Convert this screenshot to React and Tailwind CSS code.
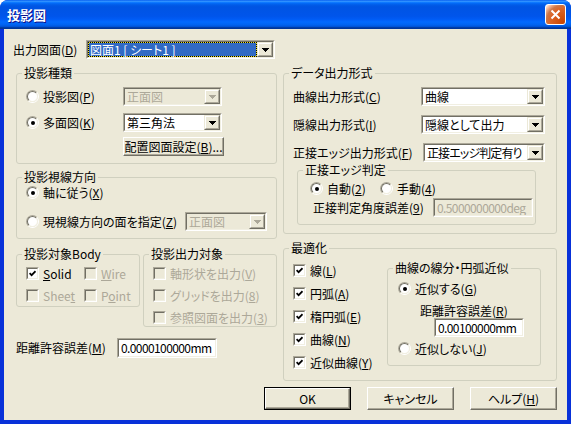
import React from "react";

// mnemonic underline
const U = ({ children }) => <span className="underline underline-offset-[1px]">{children}</span>;

function Radio({ checked }) {
  return (
    <span className="flex h-[13px] w-[13px] shrink-0 rounded-full border border-t-[#aca899] border-l-[#aca899] border-r-white border-b-white">
      <span className="flex h-full w-full items-center justify-center rounded-full border border-t-[#716f64] border-l-[#716f64] border-r-[#f1efe2] border-b-[#f1efe2] bg-white">
        {checked && <span className="h-[4px] w-[4px] rounded-full bg-black" />}
      </span>
    </span>
  );
}

function Check({ checked, disabled }) {
  return (
    <span className="flex h-[13px] w-[13px] shrink-0 border border-t-[#aca899] border-l-[#aca899] border-r-white border-b-white">
      <span
        className={`flex h-full w-full items-center justify-center border border-t-[#716f64] border-l-[#716f64] border-r-[#f1efe2] border-b-[#f1efe2] ${
          disabled ? "bg-[#ece9d8]" : "bg-white"
        }`}
      >
        {checked && (
          <svg width="7" height="7" viewBox="0 0 7 7">
            <path d="M0.6 3.2 L2.6 5.2 L6.5 1.2" fill="none" stroke="#000" strokeWidth="1.7" />
          </svg>
        )}
      </span>
    </span>
  );
}

function Opt({ radio, checked, disabled, className = "", children }) {
  return (
    <div className={`flex shrink-0 items-center gap-[4px] whitespace-nowrap ${disabled ? "text-[#aca899]" : ""} ${className}`}>
      {radio ? <Radio checked={checked} /> : <Check checked={checked} disabled={disabled} />}
      <span>{children}</span>
    </div>
  );
}

function Sunken({ className = "", inner = "", children }) {
  return (
    <div className={`flex shrink-0 border border-t-[#aca899] border-l-[#aca899] border-r-white border-b-white ${className}`}>
      <div className={`flex min-w-0 flex-1 border border-t-[#716f64] border-l-[#716f64] border-r-[#f1efe2] border-b-[#f1efe2] ${inner}`}>
        {children}
      </div>
    </div>
  );
}

function DropBtn({ disabled }) {
  return (
    <div className="flex h-full w-[16px] shrink-0 border border-t-[#ece9d8] border-l-[#ece9d8] border-r-[#716f64] border-b-[#716f64]">
      <div className="flex flex-1 items-center justify-center border border-t-white border-l-white border-r-[#aca899] border-b-[#aca899] bg-[#ece9d8]">
        <svg width="7" height="4" viewBox="0 0 7 4" shapeRendering="crispEdges">
          <polygon
            points="0,0 7,0 7,1 6,1 6,2 5,2 5,3 4,3 4,4 3,4 3,3 2,3 2,2 1,2 1,1 0,1"
            fill={disabled ? "#aca899" : "#000"}
          />
        </svg>
      </div>
    </div>
  );
}

function Combo({ className = "", text = "", disabled, selected, children }) {
  return (
    <Sunken className={`h-[19px] ${className}`} inner={disabled ? "bg-[#ece9d8]" : "bg-white"}>
      {selected ? (
        <div className="flex min-w-0 flex-1 border border-dotted border-black bg-[#f0e020]">
          <div className="flex flex-1 items-center whitespace-nowrap bg-[#316ac5] pl-[1px] text-white">{children}</div>
        </div>
      ) : (
        <div
          className={`flex min-w-0 flex-1 items-center overflow-hidden whitespace-nowrap pl-[2px] ${
            disabled ? "text-[#aca899]" : ""
          } ${text}`}
        >
          {children}
        </div>
      )}
      <DropBtn disabled={disabled} />
    </Sunken>
  );
}

function Edit({ className = "", disabled, children }) {
  return (
    <Sunken className={className} inner={disabled ? "bg-[#ece9d8] text-[#aca899]" : "bg-white"}>
      <div className="flex flex-1 items-center overflow-hidden whitespace-nowrap pl-[2px] tracking-[-0.6px]">{children}</div>
    </Sunken>
  );
}

function Btn({ className = "", def, children }) {
  return (
    <div className={`flex shrink-0 ${def ? "border border-black" : ""} ${className}`}>
      <div className="flex h-full w-full items-center justify-center whitespace-nowrap border border-t-white border-l-white border-r-[#716f64] border-b-[#716f64] shadow-[inset_-1px_-1px_0_#aca899]">
        {children}
      </div>
    </div>
  );
}

function Group({ title, className = "", children }) {
  return (
    <fieldset className={`shrink-0 rounded-[3px] border border-[#d0d0bf] ${className}`}>
      <legend className="ml-[5px] px-[2px] leading-[12px]">{title}</legend>
      {children}
    </fieldset>
  );
}

export default function App() {
  return (
    <div className="flex h-[424px] w-[571px] flex-col overflow-hidden rounded-t-[8px] bg-[#0831d9] font-['Noto_Sans_CJK_JP','Liberation_Sans',sans-serif] text-[12px] leading-[12px] text-black [font-feature-settings:'palt']">
      {/* title bar */}
      <div className="flex h-[29px] shrink-0 items-center justify-between bg-[linear-gradient(to_bottom,#0058ee_0%,#3593ff_4%,#288eff_6%,#127dff_8%,#036ffc_10%,#0262ee_14%,#0057e5_20%,#0054e3_24%,#0055eb_56%,#005bf5_66%,#026afe_76%,#0062ef_86%,#0052d6_92%,#0040ab_94%,#003092_100%)] pl-[7px] pr-[5px]">
        <span className="text-[13px] font-bold leading-[13px] text-white [text-shadow:1px_1px_0_#0f1089]">投影図</span>
        <div className="flex h-[21px] w-[21px] items-center justify-center rounded-[3px] border border-white bg-[radial-gradient(circle_at_90%_90%,#cc4600_0%,#dc6527_55%,#cd7546_70%,#ffccb2_90%,#fff_100%)]">
          <svg width="11" height="11" viewBox="0 0 11 11">
            <path d="M1.5 1.5 L9.5 9.5 M9.5 1.5 L1.5 9.5" stroke="#fff" strokeWidth="2" />
          </svg>
        </div>
      </div>

      {/* body */}
      <div className="mx-[4px] mb-[4px] flex h-[391px] flex-col bg-[#ece9d8]">
        <div className="ml-[9px] mt-[11px] flex h-[19px] items-center">
          <span className="w-[73px] whitespace-nowrap">
            出力図面(<U>D</U>)
          </span>
          <Combo selected className="w-[189px]">
            図面1 [ シート1 ]
          </Combo>
        </div>

        <div className="ml-[12px] mt-[8px] flex gap-[6px]">
          {/* left column */}
          <div className="flex w-[261px] flex-col">
            <Group title="投影種類" className="h-[97px]">
              <div className="mt-[8px] flex h-[19px] items-center pl-[9px]">
                <Opt radio className="w-[97px]">
                  投影図(<U>P</U>)
                </Opt>
                <Combo disabled className="w-[99px]">
                  正面図
                </Combo>
              </div>
              <div className="mt-[7px] flex h-[19px] items-center pl-[9px]">
                <Opt radio checked className="w-[97px]">
                  多面図(<U>K</U>)
                </Opt>
                <Combo className="w-[99px]">第三角法</Combo>
              </div>
              <div className="mt-[5px] flex pl-[106px]">
                <Btn className="h-[19px] w-[101px]">
                  配置図面設定(<U>B</U>)...
                </Btn>
              </div>
            </Group>

            <Group title="投影視線方向" className="mt-[7px] h-[68px]">
              <div className="mt-[3px] flex h-[13px] items-center pl-[9px]">
                <Opt radio checked>
                  軸に従う(<U>X</U>)
                </Opt>
              </div>
              <div className="mt-[13px] flex h-[19px] items-center pl-[9px]">
                <Opt radio className="w-[159px]">
                  現視線方向の面を指定(<U>Z</U>)
                </Opt>
                <Combo disabled className="w-[82px]">
                  正面図
                </Combo>
              </div>
            </Group>

            <div className="mt-[9px] flex items-start gap-[3px]">
              <Group title="投影対象Body" className="h-[59px] w-[124px]">
                <div className="mt-[7px] flex h-[13px] items-center pl-[9px]">
                  <Opt checked className="w-[58px]">
                    <U>S</U>olid
                  </Opt>
                  <Opt disabled>
                    <U>W</U>ire
                  </Opt>
                </div>
                <div className="mt-[9px] flex h-[13px] items-center pl-[9px]">
                  <Opt disabled className="w-[58px]">
                    Shee<U>t</U>
                  </Opt>
                  <Opt disabled>
                    P<U>o</U>int
                  </Opt>
                </div>
              </Group>
              <Group title="投影出力対象" className="h-[79px] w-[134px]">
                <div className="mt-[7px] flex flex-col gap-[9px] pl-[9px]">
                  <Opt disabled className="h-[13px]">
                    軸形状を出力(<U>V</U>)
                  </Opt>
                  <Opt disabled className="h-[13px]">
                    グリッドを出力(<U>8</U>)
                  </Opt>
                  <Opt disabled className="h-[13px]">
                    参照図面を出力(<U>3</U>)
                  </Opt>
                </div>
              </Group>
            </div>

            <div className="mt-[11px] flex h-[20px] items-center">
              <span className="w-[101px] whitespace-nowrap">
                距離許容誤差(<U>M</U>)
              </span>
              <Edit className="h-[20px] w-[100px]">0.0000100000mm</Edit>
            </div>
          </div>

          {/* right column */}
          <div className="flex w-[274px] flex-col">
            <Group title="データ出力形式" className="h-[167px]">
              <div className="mt-[8px] flex h-[19px] items-center pl-[9px]">
                <span className="w-[128px] whitespace-nowrap">
                  曲線出力形式(<U>C</U>)
                </span>
                <Combo className="w-[124px]">曲線</Combo>
              </div>
              <div className="mt-[9px] flex h-[19px] items-center pl-[9px]">
                <span className="w-[128px] whitespace-nowrap">
                  隠線出力形式(<U>I</U>)
                </span>
                <Combo className="w-[124px]">隠線として出力</Combo>
              </div>
              <div className="mt-[9px] flex h-[19px] items-center pl-[9px]">
                <span className="w-[130px] whitespace-nowrap">
                  正接エッジ出力形式(<U>F</U>)
                </span>
                <Combo className="w-[122px]" text="tracking-[-0.9px]">
                  正接エッジ判定有り
                </Combo>
              </div>
              <Group title="正接エッジ判定" className="ml-[13px] mt-[2px] h-[61px] w-[239px]">
                <div className="mt-[6px] flex h-[13px] items-center pl-[12px]">
                  <Opt radio checked className="w-[70px]">
                    自動(<U>2</U>)
                  </Opt>
                  <Opt radio>
                    手動(<U>4</U>)
                  </Opt>
                </div>
                <div className="mt-[3px] flex h-[19px] items-center pl-[15px]">
                  <span className="w-[120px] whitespace-nowrap">
                    正接判定角度誤差(<U>9</U>)
                  </span>
                  <Edit disabled className="h-[19px] w-[100px]">
                    0.5000000000deg
                  </Edit>
                </div>
              </Group>
            </Group>

            <Group title="最適化" className="mt-[8px] h-[139px]">
              <div className="flex items-start pl-[9px]">
                <div className="mt-[10px] flex w-[94px] flex-col gap-[10px]">
                  <Opt checked className="h-[13px]">
                    線(<U>L</U>)
                  </Opt>
                  <Opt checked className="h-[13px]">
                    円弧(<U>A</U>)
                  </Opt>
                  <Opt checked className="h-[13px]">
                    楕円弧(<U>E</U>)
                  </Opt>
                  <Opt checked className="h-[13px]">
                    曲線(<U>N</U>)
                  </Opt>
                  <Opt checked className="h-[13px]">
                    近似曲線(<U>Y</U>)
                  </Opt>
                </div>
                <Group title="曲線の線分・円弧近似" className="mt-[8px] h-[104px] w-[154px]">
                  <div className="mt-[8px] flex h-[13px] items-center pl-[10px]">
                    <Opt radio checked>
                      近似する(<U>G</U>)
                    </Opt>
                  </div>
                  <div className="mt-[9px] flex h-[13px] items-center whitespace-nowrap pl-[32px]">
                    距離許容誤差(<U>R</U>)
                  </div>
                  <div className="mt-[1px] flex pl-[46px]">
                    <Edit className="h-[19px] w-[90px]">0.00100000mm</Edit>
                  </div>
                  <div className="mt-[5px] flex h-[13px] items-center pl-[10px]">
                    <Opt radio>
                      近似しない(<U>J</U>)
                    </Opt>
                  </div>
                </Group>
              </div>
            </Group>
          </div>
        </div>

        <div className="mr-[10px] mt-[6px] flex justify-end gap-[16px]">
          <Btn def className="h-[23px] w-[87px]">
            OK
          </Btn>
          <Btn className="h-[23px] w-[87px]">キャンセル</Btn>
          <Btn className="h-[23px] w-[87px]">
            ヘルプ(<U>H</U>)
          </Btn>
        </div>
      </div>
    </div>
  );
}
